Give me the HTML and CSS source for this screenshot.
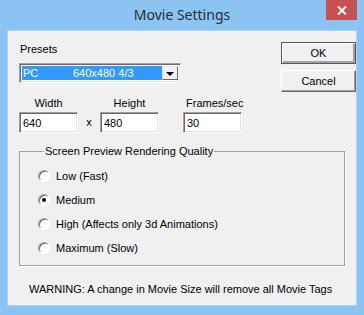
FILE: index.html
```html
<!DOCTYPE html>
<html lang="en">
<head>
    <meta charset="UTF-8">
    <title>Movie Settings</title>
    <link rel="stylesheet" href="styles.css">
</head>
<body>
    <div class="window">
        <div class="titlebar">
            <span class="title">Movie Settings</span>
            <div class="close">
                <svg width="10" height="9" viewBox="0 0 10 9">
                    <path d="M1 0.5 L9 8.5 M9 0.5 L1 8.5" stroke="#fff" stroke-width="2"/>
                </svg>
            </div>
        </div>
        <div class="client">
            <div class="top">
                <div class="left">
                    <div class="label presets-label">Presets</div>
                    <div class="combo">
                        <div class="combo-value">
                            <span class="preset-name">PC</span>
                            <span>640x480 4/3</span>
                        </div>
                        <div class="combo-btn"><span class="arrow"></span></div>
                    </div>
                    <div class="fields">
                        <div class="field">
                            <div class="label field-label">Width</div>
                            <input class="edit w-edit" type="text" value="640">
                        </div>
                        <div class="times">x</div>
                        <div class="field">
                            <div class="label field-label">Height</div>
                            <input class="edit w-edit" type="text" value="480">
                        </div>
                        <div class="field fps">
                            <div class="label field-label">Frames/sec</div>
                            <input class="edit" type="text" value="30">
                        </div>
                    </div>
                </div>
                <div class="buttons">
                    <button class="btn default">OK</button>
                    <button class="btn">Cancel</button>
                </div>
            </div>
            <fieldset class="group">
                <legend>Screen Preview Rendering Quality</legend>
                <div class="radio"><span class="dot"></span>Low (Fast)</div>
                <div class="radio"><span class="dot checked"></span>Medium</div>
                <div class="radio"><span class="dot"></span>High (Affects only 3d Animations)</div>
                <div class="radio"><span class="dot"></span>Maximum (Slow)</div>
            </fieldset>
            <div class="warning">WARNING: A change in Movie Size will remove all Movie Tags</div>
        </div>
    </div>
</body>
</html>
```

FILE: styles.css
```css
body {
    margin: 0;
    padding: 0;
    font-family: 'Liberation Sans', Arial, sans-serif;
    font-size: 11px;
    color: #000;
}

.window {
    width: 364px;
    height: 315px;
    box-sizing: border-box;
    background-color: #8bc3f3;
    padding: 0 7px 9px 7px;
    display: flex;
    flex-direction: column;
}

.titlebar {
    height: 30px;
    position: relative;
    display: flex;
    justify-content: center;
    align-items: center;
}

.title {
    font-family: 'Noto Sans', sans-serif;
    font-size: 14px;
    color: #2d2d2d;
    margin-top: -1px;
}

.close {
    position: absolute;
    top: 0;
    right: 0;
    width: 31px;
    height: 20px;
    background-color: #c75050;
    display: flex;
    justify-content: center;
    align-items: center;
}

.client {
    flex: 1;
    background-color: #f0f0f0;
    border: 1px solid #a9d2f5;
    padding: 0 0 0 11px;
}

.top {
    display: flex;
}

.left {
    width: 240px;
}

.label {
    line-height: 13px;
}

.presets-label {
    margin-top: 12px;
    margin-left: 1px;
}

.combo {
    margin-top: 7px;
    width: 162px;
    height: 20px;
    box-sizing: border-box;
    border-top: 1px solid #a0a0a0;
    border-left: 1px solid #a0a0a0;
    border-right: 1px solid #fff;
    border-bottom: 1px solid #fff;
    box-shadow: inset 1px 1px 0 #696969, inset -1px -1px 0 #e3e3e3;
    background-color: #fff;
    padding: 2px;
    display: flex;
}

.combo-value {
    flex: 1;
    background-color: #3399ff;
    color: #fff;
    display: flex;
    align-items: center;
    padding-left: 1px;
}

.preset-name {
    width: 50px;
}

.combo-btn {
    width: 16px;
    box-sizing: border-box;
    background-color: #f0f0f0;
    border-top: 1px solid #e3e3e3;
    border-left: 1px solid #e3e3e3;
    border-right: 1px solid #696969;
    border-bottom: 1px solid #696969;
    display: flex;
    justify-content: center;
    align-items: center;
}

.arrow {
    width: 0;
    height: 0;
    border-left: 4px solid transparent;
    border-right: 4px solid transparent;
    border-top: 4px solid #000;
    margin-top: 1px;
}

.fields {
    display: flex;
    align-items: flex-end;
    margin-top: 14px;
}

.field {
    display: flex;
    flex-direction: column;
    align-items: center;
}

.field-label {
    margin-bottom: 2px;
}

.fps {
    margin-left: 24px;
    align-items: flex-start;
}

.fps .field-label {
    margin-left: 3px;
}

.times {
    width: 22px;
    text-align: center;
    line-height: 21px;
}

.edit {
    width: 59px;
    height: 21px;
    box-sizing: border-box;
    margin: 0;
    border-top: 1px solid #a0a0a0;
    border-left: 1px solid #a0a0a0;
    border-right: 1px solid #fff;
    border-bottom: 1px solid #fff;
    box-shadow: inset 1px 1px 0 #696969, inset -1px -1px 0 #e3e3e3;
    background-color: #fff;
    font-family: 'Liberation Sans', Arial, sans-serif;
    font-size: 11px;
    padding: 0 0 0 3px;
    outline: none;
}

.buttons {
    display: flex;
    flex-direction: column;
    gap: 6px;
    margin-top: 11px;
    margin-left: 23px;
}

.btn {
    width: 75px;
    height: 22px;
    box-sizing: border-box;
    margin: 0;
    padding: 0;
    background-color: #f0f0f0;
    font-family: 'Liberation Sans', Arial, sans-serif;
    font-size: 11px;
    color: #000;
    border-top: 1px solid #fff;
    border-left: 1px solid #fff;
    border-right: 1px solid #696969;
    border-bottom: 1px solid #696969;
    box-shadow: inset -1px -1px 0 #a0a0a0;
}

.btn.default {
    border: 1px solid #5a5a5a;
    box-shadow: inset 1px 1px 0 #fff, inset -2px -2px 0 #a0a0a0;
}

.group {
    margin: 12px 0 0 0;
    width: 326px;
    height: 121px;
    box-sizing: border-box;
    border: 1px solid #a0a0a0;
    box-shadow: 1px 1px 0 #fff;
    padding: 7px 0 0 18px;
}

.group legend {
    padding: 0 1px;
    margin-left: 6px;
    line-height: 12px;
}

.radio {
    display: flex;
    align-items: center;
    height: 24px;
}

.dot {
    width: 12px;
    height: 12px;
    box-sizing: border-box;
    border-radius: 50%;
    background-color: #fff;
    border: 1px solid;
    border-color: #a0a0a0 #fff #fff #a0a0a0;
    box-shadow: inset 1px 1px 0 #696969;
    margin-right: 6px;
    display: flex;
    justify-content: center;
    align-items: center;
}

.dot.checked::after {
    content: '';
    width: 4px;
    height: 4px;
    border-radius: 50%;
    background-color: #000;
}

.warning {
    margin-top: 17px;
    margin-left: 10px;
}
```
